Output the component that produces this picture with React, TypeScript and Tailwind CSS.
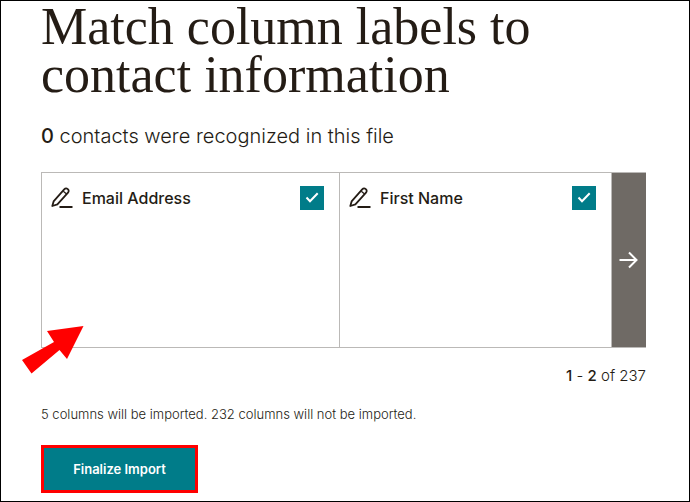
import { useState } from "react";

function PencilIcon() {
  return (
    <svg className="h-6 w-6" viewBox="0 0 24 24" fill="none" stroke="#241c15" strokeWidth="1.8" aria-hidden="true">
      <path d="M2.3 20 3.6 15.4 14.2 3.4C15.2 2.3 16.7 2.2 17.8 3.1 18.9 4.1 19 5.6 18 6.7L7.4 18.4Z" strokeLinejoin="round" />
      <path d="M13.3 5.2 16.9 8.3" strokeWidth="1.2" />
      <path d="M9.5 21H22.5" strokeWidth="2" />
    </svg>
  );
}

function ColumnCard({ id, label }: { id: string; label: string }) {
  const [checked, setChecked] = useState(true);

  return (
    <div className="border-r border-[#bbb9b7] px-2 pt-[13px]">
      <div className="flex items-center pr-[7px]">
        <button type="button" aria-label={`Edit ${label}`}>
          <PencilIcon />
        </button>
        <label htmlFor={id} className="ml-2 flex-1 text-base leading-6 font-medium">
          {label}
        </label>
        <span className="relative flex">
          <input
            id={id}
            type="checkbox"
            checked={checked}
            onChange={(e) => setChecked(e.target.checked)}
            className="h-6 w-6 appearance-none border border-[#007c89] bg-white checked:bg-[#007c89]"
          />
          {checked && (
            <svg className="pointer-events-none absolute inset-0 h-6 w-6" viewBox="0 0 24 24" fill="none" stroke="#fff" strokeWidth="2" aria-hidden="true">
              <path d="m6.5 11.5 3.5 3.7 7.7-8" />
            </svg>
          )}
        </span>
      </div>
    </div>
  );
}

export default function App() {
  return (
    <main className="min-h-screen border border-black bg-white pt-0.5 pr-[43px] pb-2 pl-10 font-['Inter',sans-serif] text-[#241c15]">
      <h1 className="max-w-[520px] font-['Liberation_Serif',serif] text-[52px] leading-[48px]">
        Match column labels to contact information
      </h1>
      <p className="mt-[23px] text-xl leading-7 font-light">
        <span className="font-medium">0</span> contacts were recognized in this file
      </p>

      {/* Columns found in the file */}
      <section className="relative mt-[22px]">
        <div className="grid h-44 grid-cols-[298fr_272fr_34px] border-y border-l border-[#bbb9b7]">
          <ColumnCard id="email" label="Email Address" />
          <ColumnCard id="first-name" label="First Name" />
          <button type="button" aria-label="Next columns" className="flex items-center justify-center bg-[#6f6a65]">
            <svg className="h-6 w-6" viewBox="0 0 24 24" fill="none" stroke="#fff" strokeWidth="2" aria-hidden="true">
              <path d="M2.5 12H19M12 4.5 19.5 12 12 19.5" />
            </svg>
          </button>
        </div>

        {/* Pointer to the import button area */}
        <svg className="pointer-events-none absolute -bottom-[26px] -left-[19px] h-12 w-[62px]" viewBox="0 0 62 48" fill="#f00" aria-hidden="true">
          <path d="M61.5 0 45 33 37.5 24 9.5 47.5 0 34 32 16 25 5Z" />
        </svg>
      </section>

      <p className="mt-4 text-right text-[15px] leading-6 font-light">
        <span className="font-medium">1</span> - <span className="font-medium">2</span> of 237
      </p>
      <p className="mt-4 text-[13px] leading-5 font-light">
        5 columns will be imported. 232 columns will not be imported.
      </p>
      <button
        type="button"
        className="mt-[21px] h-12 w-[157px] border-3 border-[#f00] bg-[#007c89] text-[13px] leading-5 font-semibold text-white"
      >
        Finalize Import
      </button>
    </main>
  );
}
